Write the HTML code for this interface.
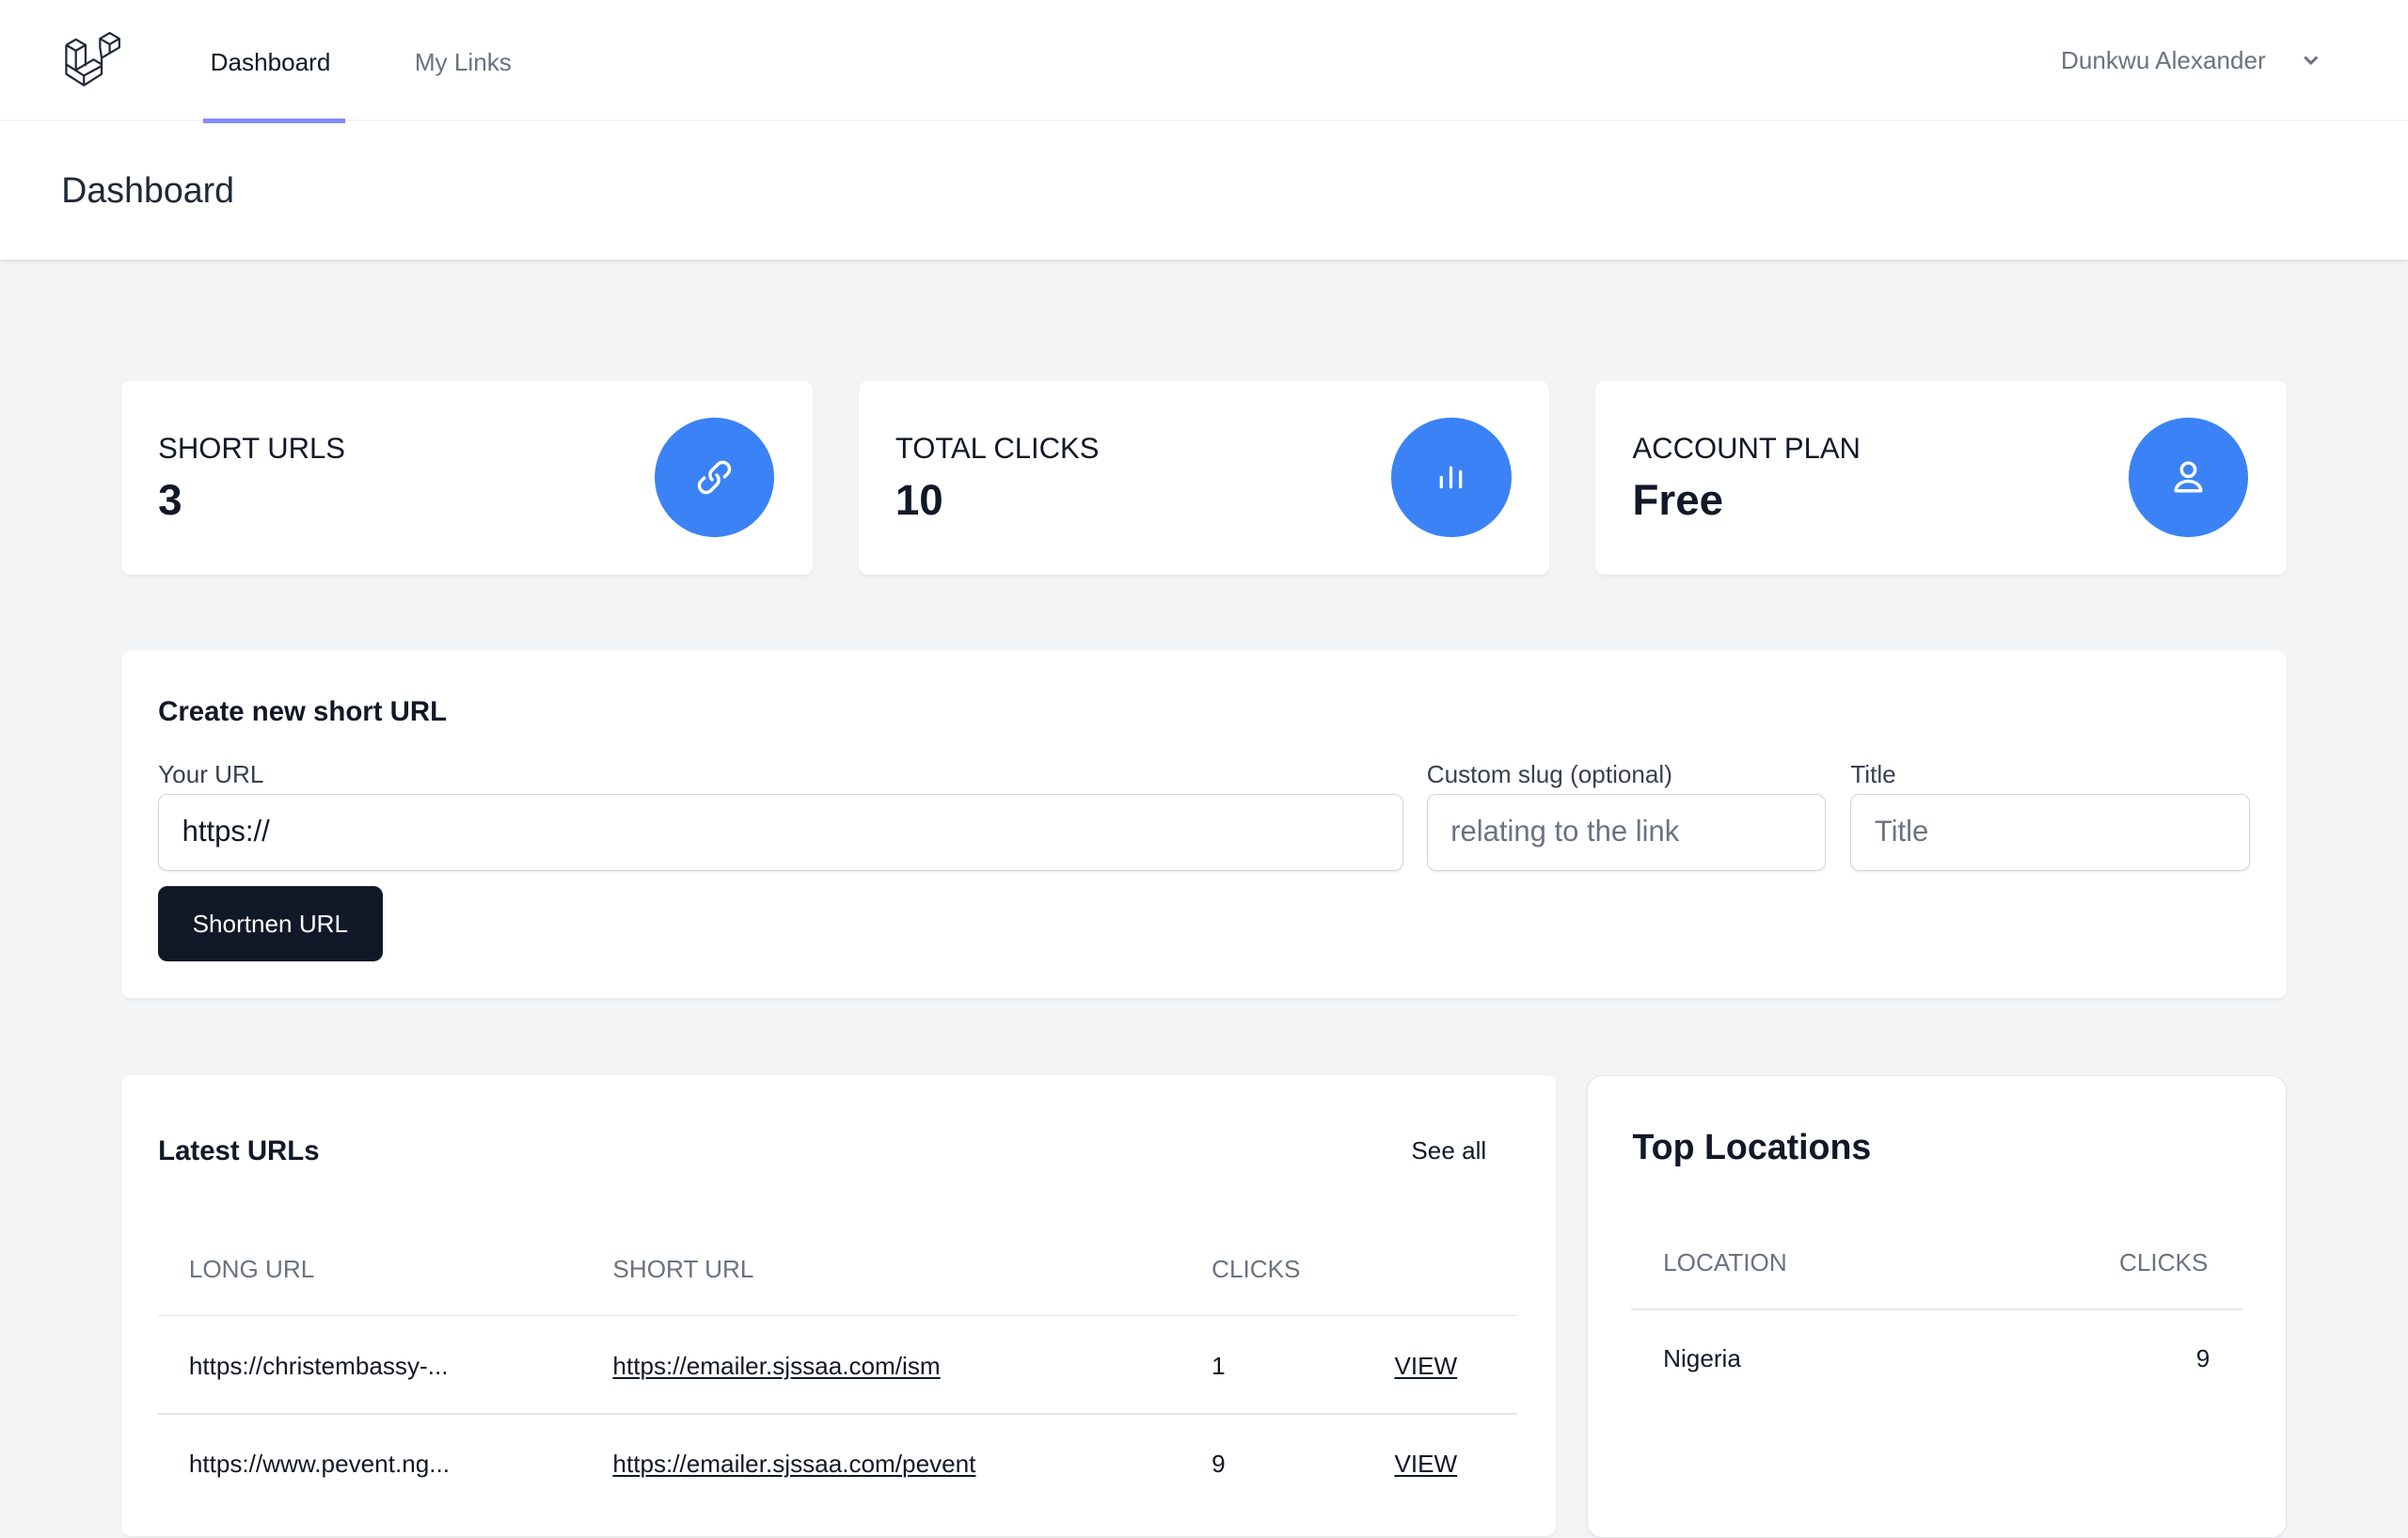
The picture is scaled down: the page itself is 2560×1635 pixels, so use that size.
<!DOCTYPE html>
<html><head><meta charset="utf-8"><style>
html,body{margin:0;padding:0}
body{width:1568px;height:980px;zoom:1.63265;background:#f3f4f6;font-family:"Liberation Sans",sans-serif;color:#111827;position:relative;overflow:hidden}
.a{position:absolute;white-space:nowrap}
.card{position:absolute;background:#fff;border-radius:6px;box-shadow:0 1px 2px rgba(0,0,0,.05)}
.circ{position:absolute;width:78px;height:78px;border-radius:50%;background:#3b82f6;display:flex;align-items:center;justify-content:center}
.inp{position:absolute;border:1px solid #d1d5db;border-radius:6px;box-shadow:0 1px 2px rgba(0,0,0,.05);background:#fff;font-size:19px;line-height:48px;padding-left:15px;box-sizing:border-box;height:50px}
.hr{position:absolute;height:1px;background:#e5e7eb}
.th{color:#6b7280;font-size:16px}
.td{font-size:16px;color:#111827}
u{text-underline-offset:2px;text-decoration-thickness:1.5px}
</style></head><body>
<div style="position:absolute;left:0;top:0;width:1568px;height:169px;background:#fff;box-shadow:0 1px 3px rgba(0,0,0,.1)"></div>
<div class="hr" style="left:0;top:78px;width:1568px;background:#f3f4f6"></div>
<svg class="a" style="left:41px;top:18px" width="44" height="42" viewBox="0 0 42 40" fill="none" stroke="#1f2937" stroke-width="1.3" stroke-linejoin="round">
<path d="M2 11 L2 29 L13 36 L24 29 L24 24 L13 30 L13 36 M13 30 L2 23 M13 30 L24 24 M2 11 L8 7.5 L14 11 L14 24 M2 11 L8 14.5 L14 11 M8 14.5 L8 26.5 M24 24 L24 19 L35 12.5 L35 7 L29 3.5 L23 7 L23 12.5 M23 7 L29 10.5 L35 7 M29 10.5 L29 16 M8 26.5 L19 20 L24 23 M24 19 L23 12.5"/>
</svg>
<div class="a" style="left:137px;top:31px;font-size:16px;color:#111827">Dashboard</div>
<div style="position:absolute;left:132px;top:77px;width:93px;height:3px;background:#818cf8"></div>
<div class="a" style="left:270px;top:31px;font-size:16px;color:#6b7280">My Links</div>
<div class="a" style="left:1342px;top:30px;font-size:16px;color:#6b7280">Dunkwu Alexander</div>
<svg class="a" style="left:1499px;top:33px" width="12" height="12" viewBox="0 0 12 12"><path d="M2 4 L6 8 L10 4" fill="none" stroke="#6b7280" stroke-width="1.8"/></svg>
<div class="a" style="left:40px;top:111px;font-size:23px;color:#1f2937">Dashboard</div>

<div class="card" style="left:79px;top:248px;width:450px;height:126px"></div>
<div class="card" style="left:559px;top:248px;width:450px;height:126px"></div>
<div class="card" style="left:1039px;top:248px;width:450px;height:126px"></div>
<div class="a" style="left:103px;top:281px;font-size:19px">SHORT URLS</div>
<div class="a" style="left:103px;top:310px;font-size:28px;font-weight:bold">3</div>
<div class="a" style="left:583px;top:281px;font-size:19px">TOTAL CLICKS</div>
<div class="a" style="left:583px;top:310px;font-size:28px;font-weight:bold">10</div>
<div class="a" style="left:1063px;top:281px;font-size:19px">ACCOUNT PLAN</div>
<div class="a" style="left:1063px;top:310px;font-size:28px;font-weight:bold">Free</div>
<div class="circ" style="left:426px;top:272px"><svg width="30" height="30" viewBox="0 0 24 24" fill="none" stroke="#fff" stroke-width="1.7" stroke-linecap="round"><path d="M13.2 10.8a3.5 3.5 0 0 1 0 5l-3 3a3.5 3.5 0 0 1-5-5l1.5-1.5M10.8 13.2a3.5 3.5 0 0 1 0-5l3-3a3.5 3.5 0 0 1 5 5l-1.5 1.5"/></svg></div>
<div class="circ" style="left:906px;top:272px"><svg width="30" height="30" viewBox="0 0 24 24" fill="none" stroke="#fff" stroke-width="1.6" stroke-linecap="round"><path d="M7 17v-5M12 17V7M17 17v-8"/></svg></div>
<div class="circ" style="left:1386px;top:272px"><svg width="30" height="30" viewBox="0 0 24 24" fill="none" stroke="#fff" stroke-width="1.7" stroke-linecap="round"><circle cx="12" cy="8" r="3.5"/><path d="M5.5 19a6.5 5 0 0 1 13 0z" stroke-linejoin="round"/></svg></div>

<div class="card" style="left:79px;top:424px;width:1410px;height:226px"></div>
<div class="a" style="left:103px;top:453px;font-size:18px;font-weight:bold;color:#111827">Create new short URL</div>
<div class="a" style="left:103px;top:495px;font-size:16px;color:#374151">Your URL</div>
<div class="a" style="left:929px;top:495px;font-size:16px;color:#374151">Custom slug (optional)</div>
<div class="a" style="left:1205px;top:495px;font-size:16px;color:#374151">Title</div>
<div class="inp" style="left:103px;top:517px;width:811px;color:#111827">https://</div>
<div class="inp" style="left:929px;top:517px;width:260px;color:#6b7280">relating to the link</div>
<div class="inp" style="left:1205px;top:517px;width:260px;color:#6b7280">Title</div>
<div class="a" style="left:103px;top:577px;width:146px;height:49px;background:#111827;border-radius:6px;color:#fff;font-size:16px;line-height:49px;text-align:center">Shortnen URL</div>

<div class="card" style="left:79px;top:700px;width:934px;height:300px"></div>
<div class="a" style="left:103px;top:739px;font-size:18px;font-weight:bold">Latest URLs</div>
<div class="a" style="left:919px;top:740px;font-size:16px">See all</div>
<div class="a th" style="left:123px;top:817px">LONG URL</div>
<div class="a th" style="left:399px;top:817px">SHORT URL</div>
<div class="a th" style="left:789px;top:817px">CLICKS</div>
<div class="hr" style="left:103px;top:856px;width:885px"></div>
<div class="a td" style="left:123px;top:880px">https://christembassy-...</div>
<div class="a td" style="left:399px;top:880px"><u>https://emailer.sjssaa.com/ism</u></div>
<div class="a td" style="left:789px;top:880px">1</div>
<div class="a td" style="left:908px;top:880px"><u>VIEW</u></div>
<div class="hr" style="left:103px;top:920px;width:885px"></div>
<div class="a td" style="left:123px;top:944px">https://www.pevent.ng...</div>
<div class="a td" style="left:399px;top:944px"><u>https://emailer.sjssaa.com/pevent</u></div>
<div class="a td" style="left:789px;top:944px">9</div>
<div class="a td" style="left:908px;top:944px"><u>VIEW</u></div>

<div class="card" style="left:1033px;top:700px;width:455px;height:300px;border:1px solid #e5e7eb;border-radius:10px"></div>
<div class="a" style="left:1063px;top:734px;font-size:23px;font-weight:bold">Top Locations</div>
<div class="a th" style="left:1083px;top:813px">LOCATION</div>
<div class="a th" style="left:1380px;top:813px">CLICKS</div>
<div class="hr" style="left:1062px;top:852px;width:398px"></div>
<div class="a td" style="left:1083px;top:875px">Nigeria</div>
<div class="a td" style="left:1430px;top:875px">9</div>
</body></html>
